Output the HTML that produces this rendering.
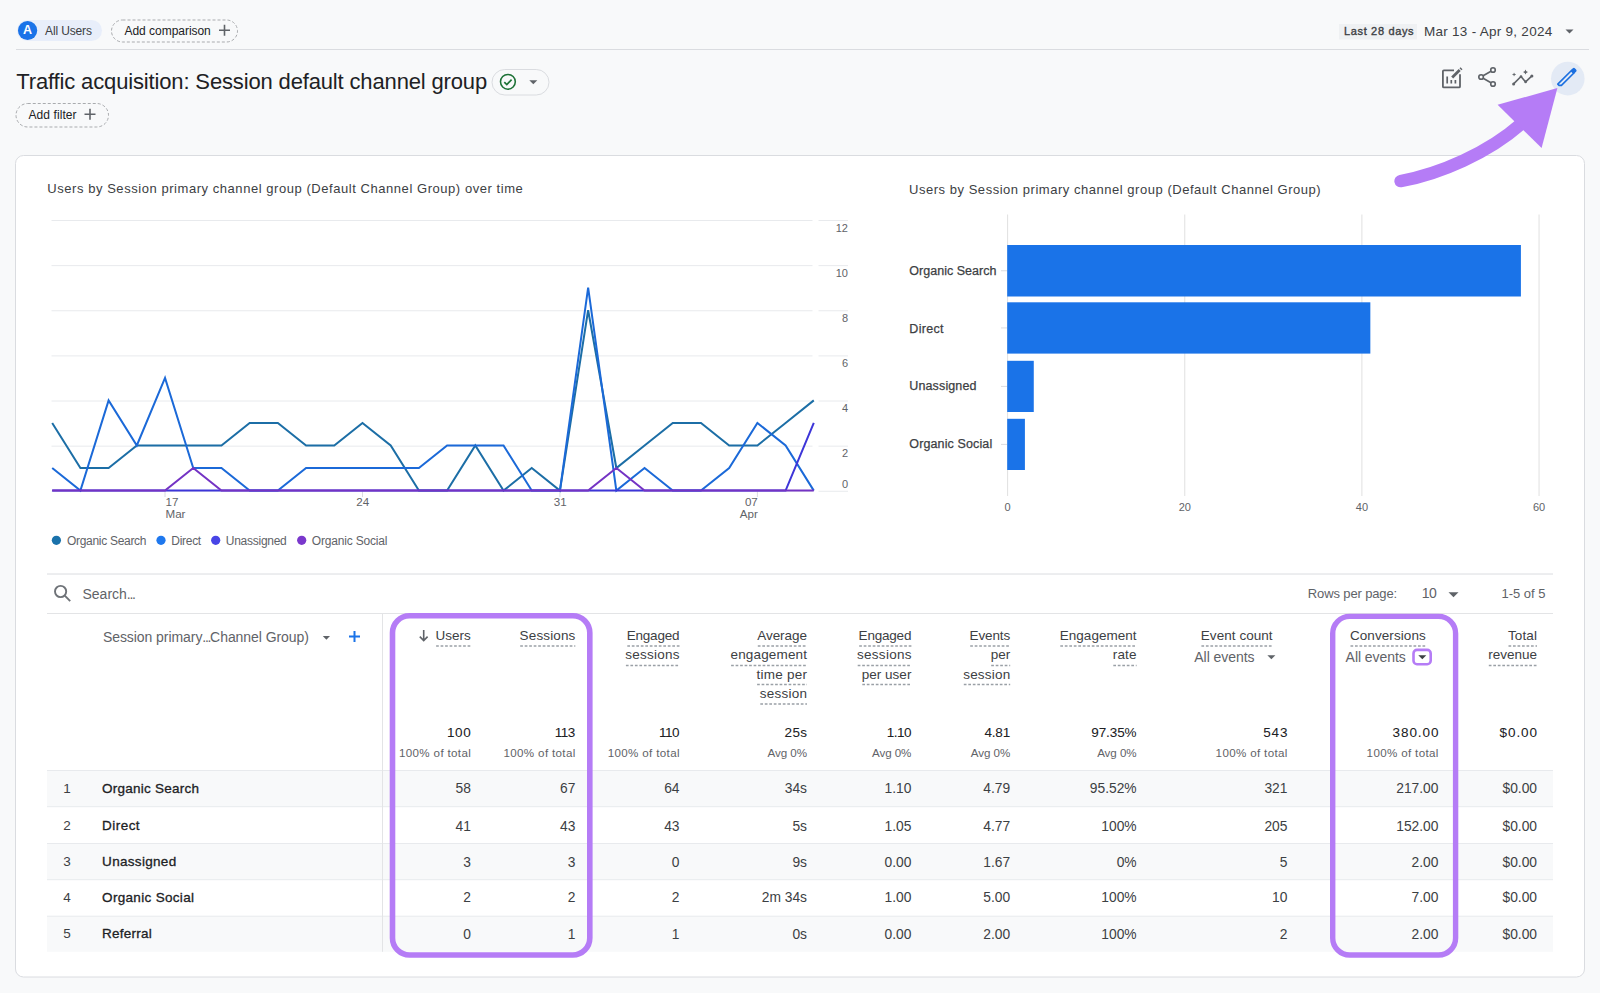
<!DOCTYPE html>
<html><head><meta charset="utf-8">
<style>
html,body{margin:0;padding:0;}
body{width:1600px;height:993px;overflow:hidden;background:#f8f9fa;position:relative;font-family:"Liberation Sans", sans-serif;}
.t{position:absolute;white-space:nowrap;}
svg{position:absolute;left:0;top:0;}
</style></head><body>
<svg width="1600" height="993" viewBox="0 0 1600 993">
  <!-- top bar -->
  <rect x="17" y="20" width="85" height="21" rx="10.5" fill="#e8eefa"/>
  <circle cx="27.6" cy="30.5" r="9.6" fill="#1a73e8"/>
  <rect x="111.5" y="20" width="126" height="22" rx="11" fill="none" stroke="#a9abae" stroke-width="1" stroke-dasharray="3 2"/>
  <path d="M219 30.3h11M224.5 24.8v11" stroke="#5f6368" stroke-width="1.6"/>
  <rect x="1339" y="24" width="78" height="15.5" fill="#eff1f3"/>
  <path d="M1565.5 29.5l4 4 4-4z" fill="#5f6368"/>
  <line x1="16" y1="49.5" x2="1589" y2="49.5" stroke="#dadce0" stroke-width="1"/>
  <!-- title pill -->
  <rect x="492" y="69.5" width="57" height="25.5" rx="12.75" fill="none" stroke="#dadce0" stroke-width="1"/>
  <circle cx="507.9" cy="81.8" r="7.4" fill="none" stroke="#1d7236" stroke-width="1.55"/>
  <path d="M504.3 82.1l2.5 2.5 4.8-4.9" fill="none" stroke="#1d7236" stroke-width="1.7"/>
  <path d="M529.3 80.3l4 4 4-4z" fill="#5f6368"/>
  <rect x="16" y="103.5" width="92.5" height="23.5" rx="11.75" fill="none" stroke="#a9abae" stroke-width="1" stroke-dasharray="3 2"/>
  <path d="M84.5 114.2h11M90 108.7v11" stroke="#5f6368" stroke-width="1.6"/>
  <!-- card -->
  <rect x="15.5" y="155.5" width="1569" height="821.5" rx="8" fill="#fff" stroke="#dadce0" stroke-width="1"/>
  <!-- top right icons -->
  <path d="M1454 70.3h-10.1a1 1 0 0 0-1 1v15.1a1 1 0 0 0 1 1h15.1a1 1 0 0 0 1-1v-12.2" fill="none" stroke="#5f6368" stroke-width="1.8"/>
  <path d="M1447.2 83.6v-7.2M1451.3 83.6v-3.6M1455.4 83.6v-3.6" fill="none" stroke="#5f6368" stroke-width="1.7"/>
  <path d="M1452.2 77.6l7.5-7.5" fill="none" stroke="#5f6368" stroke-width="2.8"/>
  <path d="M1460.5 69.3l1-1" fill="none" stroke="#5f6368" stroke-width="2.8"/>
  <g fill="none" stroke="#5f6368" stroke-width="1.6">
    <circle cx="1493" cy="70" r="2.3"/>
    <circle cx="1481.1" cy="77" r="2.3"/>
    <circle cx="1493" cy="84" r="2.3"/>
    <path d="M1483.1 75.8l7.9-4.6M1483.1 78.2l7.9 4.6"/>
  </g>
  <path d="M1513.6 83.9l7.4-7.4 4.6 5.4 6.3-6" fill="none" stroke="#5f6368" stroke-width="1.6" stroke-linejoin="round"/>
  <g fill="#5f6368">
    <circle cx="1513.6" cy="83.9" r="1.5"/><circle cx="1521" cy="76.5" r="1.3"/><circle cx="1525.6" cy="81.9" r="1.3"/><circle cx="1531.9" cy="75.9" r="1.5"/>
    <path d="M1525.5 69.6l0.8 1.7 1.7 0.8-1.7 0.8-0.8 1.7-0.8-1.7-1.7-0.8 1.7-0.8z"/>
  </g>
  <path d="M1514.1 72.9v3.2M1512.5 74.5h3.2" stroke="#5f6368" stroke-width="0.9"/>
  <circle cx="1567.8" cy="78.6" r="16.8" fill="#e3eaf5"/>
  <g transform="translate(1566.9 77.5) rotate(-44.7)">
    <path d="M-11.1 -1.75H8.5V1.75H-9.4L-11.1 0.1Z" fill="none" stroke="#1a6fe0" stroke-width="1.6" stroke-linejoin="round"/>
    <rect x="7" y="-2.35" width="5.2" height="4.7" rx="1.6" fill="#1a6fe0"/>
  </g>
  <!-- annotation arrow -->
  <path d="M1400.6 181.1C1440 174 1488 153 1521 124" fill="none" stroke="#b57cf6" stroke-width="12.5" stroke-linecap="round"/>
  <path d="M1557.4 88L1497.6 104.8L1541.6 148z" fill="#b57cf6"/>
  <line x1="51.5" y1="220.50" x2="812.5" y2="220.50" stroke="#e8eaed" stroke-width="1"/><line x1="818.5" y1="220.50" x2="848" y2="220.50" stroke="#e8eaed" stroke-width="1"/><line x1="51.5" y1="265.63" x2="812.5" y2="265.63" stroke="#e8eaed" stroke-width="1"/><line x1="818.5" y1="265.63" x2="848" y2="265.63" stroke="#e8eaed" stroke-width="1"/><line x1="51.5" y1="310.76" x2="812.5" y2="310.76" stroke="#e8eaed" stroke-width="1"/><line x1="818.5" y1="310.76" x2="848" y2="310.76" stroke="#e8eaed" stroke-width="1"/><line x1="51.5" y1="355.89" x2="812.5" y2="355.89" stroke="#e8eaed" stroke-width="1"/><line x1="818.5" y1="355.89" x2="848" y2="355.89" stroke="#e8eaed" stroke-width="1"/><line x1="51.5" y1="401.02" x2="812.5" y2="401.02" stroke="#e8eaed" stroke-width="1"/><line x1="818.5" y1="401.02" x2="848" y2="401.02" stroke="#e8eaed" stroke-width="1"/><line x1="51.5" y1="446.15" x2="812.5" y2="446.15" stroke="#e8eaed" stroke-width="1"/><line x1="818.5" y1="446.15" x2="848" y2="446.15" stroke="#e8eaed" stroke-width="1"/><line x1="51.5" y1="491.28" x2="812.5" y2="491.28" stroke="#e8eaed" stroke-width="1"/><line x1="818.5" y1="491.28" x2="848" y2="491.28" stroke="#e8eaed" stroke-width="1"/><line x1="165.03" y1="491" x2="165.03" y2="497" stroke="#dadce0" stroke-width="1"/><line x1="362.48" y1="491" x2="362.48" y2="497" stroke="#dadce0" stroke-width="1"/><line x1="559.93" y1="491" x2="559.93" y2="497" stroke="#dadce0" stroke-width="1"/><line x1="757.39" y1="491" x2="757.39" y2="497" stroke="#dadce0" stroke-width="1"/><polyline points="52.20,422.95 80.41,468.05 108.61,468.05 136.82,445.50 165.03,445.50 193.24,445.50 221.44,445.50 249.65,422.95 277.86,422.95 306.07,445.50 334.27,445.50 362.48,422.95 390.69,445.50 418.90,490.60 447.10,490.60 475.31,445.50 503.52,490.60 531.73,468.05 559.93,490.60 588.14,310.20 616.35,468.05 644.56,445.50 672.76,422.95 700.97,422.95 729.18,445.50 757.39,445.50 785.59,422.95 813.80,400.40" fill="none" stroke="#1c6ea6" stroke-width="2" stroke-linejoin="miter"/><polyline points="52.20,468.05 80.41,490.60 108.61,400.40 136.82,445.50 165.03,377.85 193.24,468.05 221.44,468.05 249.65,490.60 277.86,490.60 306.07,468.05 334.27,468.05 362.48,468.05 390.69,468.05 418.90,468.05 447.10,445.50 475.31,445.50 503.52,445.50 531.73,490.60 559.93,490.60 588.14,287.65 616.35,490.60 644.56,468.05 672.76,490.60 700.97,490.60 729.18,468.05 757.39,422.95 785.59,445.50 813.80,490.60" fill="none" stroke="#1b69d8" stroke-width="2" stroke-linejoin="miter"/><polyline points="52.20,490.60 80.41,490.60 108.61,490.60 136.82,490.60 165.03,490.60 193.24,490.60 221.44,490.60 249.65,490.60 277.86,490.60 306.07,490.60 334.27,490.60 362.48,490.60 390.69,490.60 418.90,490.60 447.10,490.60 475.31,490.60 503.52,490.60 531.73,490.60 559.93,490.60 588.14,490.60 616.35,490.60 644.56,490.60 672.76,490.60 700.97,490.60 729.18,490.60 757.39,490.60 785.59,490.60 813.80,422.95" fill="none" stroke="#3d35d8" stroke-width="2" stroke-linejoin="miter"/><polyline points="52.20,490.60 80.41,490.60 108.61,490.60 136.82,490.60 165.03,490.60 193.24,468.05 221.44,490.60 249.65,490.60 277.86,490.60 306.07,490.60 334.27,490.60 362.48,490.60 390.69,490.60 418.90,490.60 447.10,490.60 475.31,490.60 503.52,490.60 531.73,490.60 559.93,490.60 588.14,490.60 616.35,468.05 644.56,490.60 672.76,490.60 700.97,490.60 729.18,490.60 757.39,490.60 785.59,490.60 813.80,490.60" fill="none" stroke="#7433c4" stroke-width="2" stroke-linejoin="miter"/><circle cx="56.4" cy="540.3" r="4.6" fill="#1a72ab"/><circle cx="161" cy="540.3" r="4.6" fill="#1f78ee"/><circle cx="215.7" cy="540.3" r="4.6" fill="#4845e6"/><circle cx="301.7" cy="540.3" r="4.6" fill="#7a38cc"/>
  <line x1="1007.60" y1="214.5" x2="1007.60" y2="496" stroke="#e0e0e0" stroke-width="1"/><line x1="1184.75" y1="214.5" x2="1184.75" y2="496" stroke="#e0e0e0" stroke-width="1"/><line x1="1361.90" y1="214.5" x2="1361.90" y2="496" stroke="#e0e0e0" stroke-width="1"/><line x1="1539.05" y1="214.5" x2="1539.05" y2="496" stroke="#e0e0e0" stroke-width="1"/><rect x="1007.2" y="245" width="513.71" height="51.50" fill="#1a73e8"/><line x1="1001" y1="270.75" x2="1007" y2="270.75" stroke="#dadce0" stroke-width="1"/><rect x="1007.2" y="302.3" width="363.14" height="51.30" fill="#1a73e8"/><line x1="1001" y1="327.95" x2="1007" y2="327.95" stroke="#dadce0" stroke-width="1"/><rect x="1007.2" y="360.8" width="26.57" height="51.20" fill="#1a73e8"/><line x1="1001" y1="386.40" x2="1007" y2="386.40" stroke="#dadce0" stroke-width="1"/><rect x="1007.2" y="418.8" width="17.71" height="51.20" fill="#1a73e8"/><line x1="1001" y1="444.40" x2="1007" y2="444.40" stroke="#dadce0" stroke-width="1"/>
  <rect x="47" y="770.5" width="1506" height="36.20" fill="#f8f9fa"/><rect x="47" y="843.5" width="1506" height="36.20" fill="#f8f9fa"/><rect x="47" y="916.2" width="1506" height="35.60" fill="#f8f9fa"/><line x1="47" y1="770.5" x2="1553" y2="770.5" stroke="#e8eaed" stroke-width="1"/><line x1="47" y1="806.7" x2="1553" y2="806.7" stroke="#e8eaed" stroke-width="1"/><line x1="47" y1="843.5" x2="1553" y2="843.5" stroke="#e8eaed" stroke-width="1"/><line x1="47" y1="879.7" x2="1553" y2="879.7" stroke="#e8eaed" stroke-width="1"/><line x1="47" y1="916.2" x2="1553" y2="916.2" stroke="#e8eaed" stroke-width="1"/><line x1="47" y1="574" x2="1553" y2="574" stroke="#dadce0" stroke-width="1"/><line x1="47" y1="613.5" x2="1553" y2="613.5" stroke="#e3e4e6" stroke-width="1"/><line x1="382.5" y1="613.5" x2="382.5" y2="951.8" stroke="#e3e4e6" stroke-width="1"/><line x1="436.10" y1="646.10" x2="470.80" y2="646.10" stroke="#9aa0a6" stroke-width="1.5" stroke-dasharray="2.7 1.8"/><line x1="520.20" y1="646.10" x2="575.30" y2="646.10" stroke="#9aa0a6" stroke-width="1.5" stroke-dasharray="2.7 1.8"/><line x1="627.30" y1="646.10" x2="679.50" y2="646.10" stroke="#9aa0a6" stroke-width="1.5" stroke-dasharray="2.7 1.8"/><line x1="625.90" y1="665.40" x2="679.50" y2="665.40" stroke="#9aa0a6" stroke-width="1.5" stroke-dasharray="2.7 1.8"/><line x1="757.80" y1="646.10" x2="807.00" y2="646.10" stroke="#9aa0a6" stroke-width="1.5" stroke-dasharray="2.7 1.8"/><line x1="731.10" y1="665.40" x2="807.00" y2="665.40" stroke="#9aa0a6" stroke-width="1.5" stroke-dasharray="2.7 1.8"/><line x1="757.10" y1="684.60" x2="807.00" y2="684.60" stroke="#9aa0a6" stroke-width="1.5" stroke-dasharray="2.7 1.8"/><line x1="760.30" y1="703.90" x2="807.00" y2="703.90" stroke="#9aa0a6" stroke-width="1.5" stroke-dasharray="2.7 1.8"/><line x1="859.20" y1="646.10" x2="911.40" y2="646.10" stroke="#9aa0a6" stroke-width="1.5" stroke-dasharray="2.7 1.8"/><line x1="857.70" y1="665.40" x2="911.40" y2="665.40" stroke="#9aa0a6" stroke-width="1.5" stroke-dasharray="2.7 1.8"/><line x1="862.30" y1="684.60" x2="911.40" y2="684.60" stroke="#9aa0a6" stroke-width="1.5" stroke-dasharray="2.7 1.8"/><line x1="970.20" y1="646.10" x2="1010.20" y2="646.10" stroke="#9aa0a6" stroke-width="1.5" stroke-dasharray="2.7 1.8"/><line x1="991.20" y1="665.40" x2="1010.20" y2="665.40" stroke="#9aa0a6" stroke-width="1.5" stroke-dasharray="2.7 1.8"/><line x1="963.80" y1="684.60" x2="1010.20" y2="684.60" stroke="#9aa0a6" stroke-width="1.5" stroke-dasharray="2.7 1.8"/><line x1="1060.30" y1="646.10" x2="1136.60" y2="646.10" stroke="#9aa0a6" stroke-width="1.5" stroke-dasharray="2.7 1.8"/><line x1="1113.30" y1="665.40" x2="1136.60" y2="665.40" stroke="#9aa0a6" stroke-width="1.5" stroke-dasharray="2.7 1.8"/><line x1="1201.40" y1="646.10" x2="1272.60" y2="646.10" stroke="#9aa0a6" stroke-width="1.5" stroke-dasharray="2.7 1.8"/><line x1="1350.50" y1="646.10" x2="1425.80" y2="646.10" stroke="#9aa0a6" stroke-width="1.5" stroke-dasharray="2.7 1.8"/><line x1="1508.50" y1="646.10" x2="1537.00" y2="646.10" stroke="#9aa0a6" stroke-width="1.5" stroke-dasharray="2.7 1.8"/><line x1="1488.80" y1="665.40" x2="1537.00" y2="665.40" stroke="#9aa0a6" stroke-width="1.5" stroke-dasharray="2.7 1.8"/>
  <!-- table icons -->
  <g fill="none" stroke="#6f7378" stroke-width="1.9">
    <circle cx="60.6" cy="591.5" r="5.6"/>
    <path d="M64.8 595.7l5.4 5.4"/>
  </g>
  <path d="M1448.5 592.3l5 5 5-5z" fill="#5f6368"/>
  <path d="M322.8 636l3.6 3.7 3.6-3.7z" fill="#5f6368"/>
  <path d="M349 636.6h11M354.5 631.1v11" stroke="#1a73e8" stroke-width="2"/>
  <path d="M423.7 630v10.4M419.8 636.6l3.9 3.9 3.9-3.9" fill="none" stroke="#5f6368" stroke-width="1.6"/>
  <path d="M1267.4 655.3l4 4 4-4z" fill="#5f6368"/>
  <path d="M1418.3 655.3l4 4 4-4z" fill="#3c4043"/>
  <rect x="1413.5" y="649.9" width="17.2" height="14.3" rx="3.5" fill="none" stroke="#b57cf6" stroke-width="2.6"/>
  <rect x="392.5" y="615.8" width="197.3" height="339.2" rx="17" fill="none" stroke="#b57cf6" stroke-width="5.6"/>
  <rect x="1332.7" y="616.4" width="122.9" height="338.6" rx="17" fill="none" stroke="#b57cf6" stroke-width="5.4"/>
</svg>
<div class="t" id="t0" style="top:23.36px;font-size:12.5px;line-height:15.625px;color:#fff;font-weight:700;left:-372.40px;width:800px;text-align:center;">A</div>
<div class="t" id="t1" style="top:23.94px;font-size:12px;line-height:15.0px;color:#3c4043;letter-spacing:-0.127px;left:45.00px;">All Users</div>
<div class="t" id="t2" style="top:23.94px;font-size:12px;line-height:15.0px;color:#202124;letter-spacing:-0.032px;left:124.50px;">Add comparison</div>
<div class="t" id="t3" style="top:25.01px;font-size:11px;line-height:13.75px;color:#3c4043;letter-spacing:0.655px;left:1344.00px;-webkit-text-stroke:0.35px #3c4043;">Last 28 days</div>
<div class="t" id="t4" style="top:23.58px;font-size:13.5px;line-height:16.875px;color:#3c4043;letter-spacing:0.270px;left:1424.00px;">Mar 13 - Apr 9, 2024</div>
<div class="t" id="t5" style="top:67.73px;font-size:22px;line-height:27.5px;color:#202124;letter-spacing:-0.149px;left:16.30px;">Traffic acquisition: Session default channel group</div>
<div class="t" id="t6" style="top:107.84px;font-size:12px;line-height:15.0px;color:#202124;letter-spacing:0.081px;left:28.50px;">Add filter</div>
<div class="t" id="t7" style="top:181.47px;font-size:13px;line-height:16.25px;color:#3c4043;letter-spacing:0.550px;left:47.30px;">Users by Session primary channel group (Default Channel Group) over time</div>
<div class="t" id="t8" style="top:221.81px;font-size:11px;line-height:13.75px;color:#5f6368;right:752.00px;">12</div>
<div class="t" id="t9" style="top:266.94px;font-size:11px;line-height:13.75px;color:#5f6368;right:752.00px;">10</div>
<div class="t" id="t10" style="top:312.07px;font-size:11px;line-height:13.75px;color:#5f6368;right:752.00px;">8</div>
<div class="t" id="t11" style="top:357.20px;font-size:11px;line-height:13.75px;color:#5f6368;right:752.00px;">6</div>
<div class="t" id="t12" style="top:402.33px;font-size:11px;line-height:13.75px;color:#5f6368;right:752.00px;">4</div>
<div class="t" id="t13" style="top:447.46px;font-size:11px;line-height:13.75px;color:#5f6368;right:752.00px;">2</div>
<div class="t" id="t14" style="top:477.61px;font-size:11px;line-height:13.75px;color:#5f6368;right:752.00px;">0</div>
<div class="t" id="t15" style="top:495.23px;font-size:11.6px;line-height:14.5px;color:#5f6368;left:165.50px;">17</div>
<div class="t" id="t16" style="top:507.03px;font-size:11.6px;line-height:14.5px;color:#5f6368;left:165.50px;">Mar</div>
<div class="t" id="t17" style="top:495.23px;font-size:11.6px;line-height:14.5px;color:#5f6368;left:-37.20px;width:800px;text-align:center;">24</div>
<div class="t" id="t18" style="top:495.23px;font-size:11.6px;line-height:14.5px;color:#5f6368;left:160.30px;width:800px;text-align:center;">31</div>
<div class="t" id="t19" style="top:495.23px;font-size:11.6px;line-height:14.5px;color:#5f6368;right:842.20px;">07</div>
<div class="t" id="t20" style="top:507.03px;font-size:11.6px;line-height:14.5px;color:#5f6368;right:842.20px;">Apr</div>
<div class="t" id="t21" style="top:533.84px;font-size:12px;line-height:15.0px;color:#5f6368;letter-spacing:-0.298px;left:67.00px;">Organic Search</div>
<div class="t" id="t22" style="top:533.84px;font-size:12px;line-height:15.0px;color:#5f6368;letter-spacing:-0.289px;left:171.30px;">Direct</div>
<div class="t" id="t23" style="top:533.84px;font-size:12px;line-height:15.0px;color:#5f6368;letter-spacing:-0.266px;left:225.80px;">Unassigned</div>
<div class="t" id="t24" style="top:533.84px;font-size:12px;line-height:15.0px;color:#5f6368;letter-spacing:-0.188px;left:311.80px;">Organic Social</div>
<div class="t" id="t25" style="top:182.07px;font-size:13px;line-height:16.25px;color:#3c4043;letter-spacing:0.530px;left:909.00px;">Users by Session primary channel group (Default Channel Group)</div>
<div class="t" id="t26" style="top:263.71px;font-size:12.5px;line-height:15.625px;color:#3c4043;letter-spacing:0.019px;left:909.30px;-webkit-text-stroke:0.25px #3c4043;">Organic Search</div>
<div class="t" id="t27" style="top:322.11px;font-size:12.5px;line-height:15.625px;color:#3c4043;letter-spacing:0.331px;left:909.30px;-webkit-text-stroke:0.25px #3c4043;">Direct</div>
<div class="t" id="t28" style="top:379.36px;font-size:12.5px;line-height:15.625px;color:#3c4043;letter-spacing:0.131px;left:909.30px;-webkit-text-stroke:0.25px #3c4043;">Unassigned</div>
<div class="t" id="t29" style="top:437.36px;font-size:12.5px;line-height:15.625px;color:#3c4043;letter-spacing:0.124px;left:909.30px;-webkit-text-stroke:0.25px #3c4043;">Organic Social</div>
<div class="t" id="t30" style="top:500.71px;font-size:11px;line-height:13.75px;color:#5f6368;left:607.60px;width:800px;text-align:center;">0</div>
<div class="t" id="t31" style="top:500.71px;font-size:11px;line-height:13.75px;color:#5f6368;left:784.75px;width:800px;text-align:center;">20</div>
<div class="t" id="t32" style="top:500.71px;font-size:11px;line-height:13.75px;color:#5f6368;left:961.90px;width:800px;text-align:center;">40</div>
<div class="t" id="t33" style="top:500.71px;font-size:11px;line-height:13.75px;color:#5f6368;left:1139.05px;width:800px;text-align:center;">60</div>
<div class="t" id="t34" style="top:585.60px;font-size:14px;line-height:17.5px;color:#5f6368;left:82.50px;">Search<span style="letter-spacing:-1.3px">...</span></div>
<div class="t" id="t35" style="top:585.97px;font-size:13px;line-height:16.25px;color:#5f6368;letter-spacing:-0.128px;left:1307.80px;">Rows per page:</div>
<div class="t" id="t36" style="top:585.40px;font-size:14px;line-height:17.5px;color:#5f6368;letter-spacing:-0.500px;left:1421.80px;">10</div>
<div class="t" id="t37" style="top:585.97px;font-size:13px;line-height:16.25px;color:#5f6368;letter-spacing:-0.041px;left:1501.60px;">1-5 of 5</div>
<div class="t" id="t38" style="top:629.00px;font-size:14px;line-height:17.5px;color:#5f6368;letter-spacing:-0.062px;left:102.90px;">Session primary<span style="letter-spacing:-1.3px">...</span>Channel Group)</div>
<div class="t" id="t39" style="top:628.18px;font-size:13.5px;line-height:16.875px;color:#3c4043;letter-spacing:0.011px;right:1129.19px;">Users</div>
<div class="t" id="t40" style="top:628.18px;font-size:13.5px;line-height:16.875px;color:#3c4043;letter-spacing:0.131px;right:1024.57px;">Sessions</div>
<div class="t" id="t41" style="top:628.18px;font-size:13.5px;line-height:16.875px;color:#3c4043;letter-spacing:-0.209px;right:920.71px;">Engaged</div>
<div class="t" id="t42" style="top:647.48px;font-size:13.5px;line-height:16.875px;color:#3c4043;letter-spacing:0.238px;right:920.26px;">sessions</div>
<div class="t" id="t43" style="top:628.18px;font-size:13.5px;line-height:16.875px;color:#3c4043;letter-spacing:-0.042px;right:793.04px;">Average</div>
<div class="t" id="t44" style="top:647.48px;font-size:13.5px;line-height:16.875px;color:#3c4043;letter-spacing:0.159px;right:792.84px;">engagement</div>
<div class="t" id="t45" style="top:666.68px;font-size:13.5px;line-height:16.875px;color:#3c4043;letter-spacing:0.248px;right:792.75px;">time per</div>
<div class="t" id="t46" style="top:685.98px;font-size:13.5px;line-height:16.875px;color:#3c4043;letter-spacing:0.254px;right:792.75px;">session</div>
<div class="t" id="t47" style="top:628.18px;font-size:13.5px;line-height:16.875px;color:#3c4043;letter-spacing:-0.209px;right:688.81px;">Engaged</div>
<div class="t" id="t48" style="top:647.48px;font-size:13.5px;line-height:16.875px;color:#3c4043;letter-spacing:0.252px;right:688.35px;">sessions</div>
<div class="t" id="t49" style="top:666.68px;font-size:13.5px;line-height:16.875px;color:#3c4043;letter-spacing:0.025px;right:688.58px;">per user</div>
<div class="t" id="t50" style="top:628.18px;font-size:13.5px;line-height:16.875px;color:#3c4043;letter-spacing:-0.135px;right:589.93px;">Events</div>
<div class="t" id="t51" style="top:647.48px;font-size:13.5px;line-height:16.875px;color:#3c4043;letter-spacing:0.036px;right:589.76px;">per</div>
<div class="t" id="t52" style="top:666.68px;font-size:13.5px;line-height:16.875px;color:#3c4043;letter-spacing:0.203px;right:589.60px;">session</div>
<div class="t" id="t53" style="top:628.18px;font-size:13.5px;line-height:16.875px;color:#3c4043;letter-spacing:0.037px;right:463.36px;">Engagement</div>
<div class="t" id="t54" style="top:647.48px;font-size:13.5px;line-height:16.875px;color:#3c4043;letter-spacing:0.208px;right:463.19px;">rate</div>
<div class="t" id="t55" style="top:628.18px;font-size:13.5px;line-height:16.875px;color:#3c4043;letter-spacing:0.049px;right:327.35px;">Event count</div>
<div class="t" id="t56" style="top:628.18px;font-size:13.5px;line-height:16.875px;color:#3c4043;letter-spacing:0.085px;right:174.12px;">Conversions</div>
<div class="t" id="t57" style="top:628.18px;font-size:13.5px;line-height:16.875px;color:#3c4043;letter-spacing:0.143px;right:62.86px;">Total</div>
<div class="t" id="t58" style="top:647.48px;font-size:13.5px;line-height:16.875px;color:#3c4043;right:63.00px;">revenue</div>
<div class="t" id="t59" style="top:648.90px;font-size:14px;line-height:17.5px;color:#5f6368;letter-spacing:-0.044px;left:1194.30px;">All events</div>
<div class="t" id="t60" style="top:648.90px;font-size:14px;line-height:17.5px;color:#5f6368;letter-spacing:-0.056px;left:1345.60px;">All events</div>
<div class="t" id="t61" style="top:725.08px;font-size:13.5px;line-height:16.875px;color:#202124;letter-spacing:0.684px;right:1128.52px;-webkit-text-stroke:0.05px #202124;">100</div>
<div class="t" id="t62" style="top:746.33px;font-size:11.6px;line-height:14.5px;color:#5f6368;letter-spacing:0.343px;right:1128.86px;">100% of total</div>
<div class="t" id="t63" style="top:725.08px;font-size:13.5px;line-height:16.875px;color:#202124;letter-spacing:-0.500px;right:1025.20px;-webkit-text-stroke:0.05px #202124;">113</div>
<div class="t" id="t64" style="top:746.33px;font-size:11.6px;line-height:14.5px;color:#5f6368;letter-spacing:0.343px;right:1024.36px;">100% of total</div>
<div class="t" id="t65" style="top:725.08px;font-size:13.5px;line-height:16.875px;color:#202124;letter-spacing:-0.465px;right:920.97px;-webkit-text-stroke:0.05px #202124;">110</div>
<div class="t" id="t66" style="top:746.33px;font-size:11.6px;line-height:14.5px;color:#5f6368;letter-spacing:0.343px;right:920.16px;">100% of total</div>
<div class="t" id="t67" style="top:725.08px;font-size:13.5px;line-height:16.875px;color:#202124;letter-spacing:0.313px;right:792.69px;-webkit-text-stroke:0.05px #202124;">25s</div>
<div class="t" id="t68" style="top:746.33px;font-size:11.6px;line-height:14.5px;color:#5f6368;letter-spacing:-0.052px;right:793.05px;">Avg 0%</div>
<div class="t" id="t69" style="top:725.08px;font-size:13.5px;line-height:16.875px;color:#202124;letter-spacing:-0.500px;right:689.10px;-webkit-text-stroke:0.05px #202124;">1.10</div>
<div class="t" id="t70" style="top:746.33px;font-size:11.6px;line-height:14.5px;color:#5f6368;letter-spacing:-0.052px;right:688.65px;">Avg 0%</div>
<div class="t" id="t71" style="top:725.08px;font-size:13.5px;line-height:16.875px;color:#202124;letter-spacing:-0.160px;right:589.96px;-webkit-text-stroke:0.05px #202124;">4.81</div>
<div class="t" id="t72" style="top:746.33px;font-size:11.6px;line-height:14.5px;color:#5f6368;letter-spacing:-0.052px;right:589.85px;">Avg 0%</div>
<div class="t" id="t73" style="top:725.08px;font-size:13.5px;line-height:16.875px;color:#202124;letter-spacing:-0.099px;right:463.50px;-webkit-text-stroke:0.05px #202124;">97.35%</div>
<div class="t" id="t74" style="top:746.33px;font-size:11.6px;line-height:14.5px;color:#5f6368;letter-spacing:-0.052px;right:463.45px;">Avg 0%</div>
<div class="t" id="t75" style="top:725.08px;font-size:13.5px;line-height:16.875px;color:#202124;letter-spacing:0.784px;right:311.82px;-webkit-text-stroke:0.05px #202124;">543</div>
<div class="t" id="t76" style="top:746.33px;font-size:11.6px;line-height:14.5px;color:#5f6368;letter-spacing:0.343px;right:312.26px;">100% of total</div>
<div class="t" id="t77" style="top:725.08px;font-size:13.5px;line-height:16.875px;color:#202124;letter-spacing:0.900px;right:160.70px;-webkit-text-stroke:0.05px #202124;">380.00</div>
<div class="t" id="t78" style="top:746.33px;font-size:11.6px;line-height:14.5px;color:#5f6368;letter-spacing:0.343px;right:161.26px;">100% of total</div>
<div class="t" id="t79" style="top:725.08px;font-size:13.5px;line-height:16.875px;color:#202124;letter-spacing:0.900px;right:62.10px;-webkit-text-stroke:0.05px #202124;">$0.00</div>
<div class="t" id="t80" style="top:780.58px;font-size:13.5px;line-height:16.875px;color:#3c4043;left:63.20px;">1</div>
<div class="t" id="t81" style="top:780.58px;font-size:13.5px;line-height:16.875px;color:#202124;letter-spacing:0.231px;left:102.10px;-webkit-text-stroke:0.3px #202124;">Organic Search</div>
<div class="t" id="t82" style="top:780.29px;font-size:13.8px;line-height:17.25px;color:#3c4043;right:1129.20px;">58</div>
<div class="t" id="t83" style="top:780.29px;font-size:13.8px;line-height:17.25px;color:#3c4043;right:1024.70px;">67</div>
<div class="t" id="t84" style="top:780.29px;font-size:13.8px;line-height:17.25px;color:#3c4043;right:920.50px;">64</div>
<div class="t" id="t85" style="top:780.29px;font-size:13.8px;line-height:17.25px;color:#3c4043;right:793.00px;">34s</div>
<div class="t" id="t86" style="top:780.29px;font-size:13.8px;line-height:17.25px;color:#3c4043;right:688.60px;">1.10</div>
<div class="t" id="t87" style="top:780.29px;font-size:13.8px;line-height:17.25px;color:#3c4043;right:589.80px;">4.79</div>
<div class="t" id="t88" style="top:780.29px;font-size:13.8px;line-height:17.25px;color:#3c4043;right:463.40px;">95.52%</div>
<div class="t" id="t89" style="top:780.29px;font-size:13.8px;line-height:17.25px;color:#3c4043;right:312.60px;">321</div>
<div class="t" id="t90" style="top:780.29px;font-size:13.8px;line-height:17.25px;color:#3c4043;right:161.60px;">217.00</div>
<div class="t" id="t91" style="top:780.29px;font-size:13.8px;line-height:17.25px;color:#3c4043;right:63.00px;">$0.00</div>
<div class="t" id="t92" style="top:817.88px;font-size:13.5px;line-height:16.875px;color:#3c4043;left:63.20px;">2</div>
<div class="t" id="t93" style="top:817.88px;font-size:13.5px;line-height:16.875px;color:#202124;letter-spacing:0.448px;left:102.10px;-webkit-text-stroke:0.3px #202124;">Direct</div>
<div class="t" id="t94" style="top:817.59px;font-size:13.8px;line-height:17.25px;color:#3c4043;right:1129.20px;">41</div>
<div class="t" id="t95" style="top:817.59px;font-size:13.8px;line-height:17.25px;color:#3c4043;right:1024.70px;">43</div>
<div class="t" id="t96" style="top:817.59px;font-size:13.8px;line-height:17.25px;color:#3c4043;right:920.50px;">43</div>
<div class="t" id="t97" style="top:817.59px;font-size:13.8px;line-height:17.25px;color:#3c4043;right:793.00px;">5s</div>
<div class="t" id="t98" style="top:817.59px;font-size:13.8px;line-height:17.25px;color:#3c4043;right:688.60px;">1.05</div>
<div class="t" id="t99" style="top:817.59px;font-size:13.8px;line-height:17.25px;color:#3c4043;right:589.80px;">4.77</div>
<div class="t" id="t100" style="top:817.59px;font-size:13.8px;line-height:17.25px;color:#3c4043;right:463.40px;">100%</div>
<div class="t" id="t101" style="top:817.59px;font-size:13.8px;line-height:17.25px;color:#3c4043;right:312.60px;">205</div>
<div class="t" id="t102" style="top:817.59px;font-size:13.8px;line-height:17.25px;color:#3c4043;right:161.60px;">152.00</div>
<div class="t" id="t103" style="top:817.59px;font-size:13.8px;line-height:17.25px;color:#3c4043;right:63.00px;">$0.00</div>
<div class="t" id="t104" style="top:853.88px;font-size:13.5px;line-height:16.875px;color:#3c4043;left:63.20px;">3</div>
<div class="t" id="t105" style="top:853.88px;font-size:13.5px;line-height:16.875px;color:#202124;letter-spacing:0.310px;left:102.10px;-webkit-text-stroke:0.3px #202124;">Unassigned</div>
<div class="t" id="t106" style="top:853.59px;font-size:13.8px;line-height:17.25px;color:#3c4043;right:1129.20px;">3</div>
<div class="t" id="t107" style="top:853.59px;font-size:13.8px;line-height:17.25px;color:#3c4043;right:1024.70px;">3</div>
<div class="t" id="t108" style="top:853.59px;font-size:13.8px;line-height:17.25px;color:#3c4043;right:920.50px;">0</div>
<div class="t" id="t109" style="top:853.59px;font-size:13.8px;line-height:17.25px;color:#3c4043;right:793.00px;">9s</div>
<div class="t" id="t110" style="top:853.59px;font-size:13.8px;line-height:17.25px;color:#3c4043;right:688.60px;">0.00</div>
<div class="t" id="t111" style="top:853.59px;font-size:13.8px;line-height:17.25px;color:#3c4043;right:589.80px;">1.67</div>
<div class="t" id="t112" style="top:853.59px;font-size:13.8px;line-height:17.25px;color:#3c4043;right:463.40px;">0%</div>
<div class="t" id="t113" style="top:853.59px;font-size:13.8px;line-height:17.25px;color:#3c4043;right:312.60px;">5</div>
<div class="t" id="t114" style="top:853.59px;font-size:13.8px;line-height:17.25px;color:#3c4043;right:161.60px;">2.00</div>
<div class="t" id="t115" style="top:853.59px;font-size:13.8px;line-height:17.25px;color:#3c4043;right:63.00px;">$0.00</div>
<div class="t" id="t116" style="top:889.78px;font-size:13.5px;line-height:16.875px;color:#3c4043;left:63.20px;">4</div>
<div class="t" id="t117" style="top:889.78px;font-size:13.5px;line-height:16.875px;color:#202124;letter-spacing:0.316px;left:102.10px;-webkit-text-stroke:0.3px #202124;">Organic Social</div>
<div class="t" id="t118" style="top:889.49px;font-size:13.8px;line-height:17.25px;color:#3c4043;right:1129.20px;">2</div>
<div class="t" id="t119" style="top:889.49px;font-size:13.8px;line-height:17.25px;color:#3c4043;right:1024.70px;">2</div>
<div class="t" id="t120" style="top:889.49px;font-size:13.8px;line-height:17.25px;color:#3c4043;right:920.50px;">2</div>
<div class="t" id="t121" style="top:889.49px;font-size:13.8px;line-height:17.25px;color:#3c4043;right:793.00px;">2m 34s</div>
<div class="t" id="t122" style="top:889.49px;font-size:13.8px;line-height:17.25px;color:#3c4043;right:688.60px;">1.00</div>
<div class="t" id="t123" style="top:889.49px;font-size:13.8px;line-height:17.25px;color:#3c4043;right:589.80px;">5.00</div>
<div class="t" id="t124" style="top:889.49px;font-size:13.8px;line-height:17.25px;color:#3c4043;right:463.40px;">100%</div>
<div class="t" id="t125" style="top:889.49px;font-size:13.8px;line-height:17.25px;color:#3c4043;right:312.60px;">10</div>
<div class="t" id="t126" style="top:889.49px;font-size:13.8px;line-height:17.25px;color:#3c4043;right:161.60px;">7.00</div>
<div class="t" id="t127" style="top:889.49px;font-size:13.8px;line-height:17.25px;color:#3c4043;right:63.00px;">$0.00</div>
<div class="t" id="t128" style="top:925.98px;font-size:13.5px;line-height:16.875px;color:#3c4043;left:63.20px;">5</div>
<div class="t" id="t129" style="top:925.98px;font-size:13.5px;line-height:16.875px;color:#202124;letter-spacing:0.239px;left:102.10px;-webkit-text-stroke:0.3px #202124;">Referral</div>
<div class="t" id="t130" style="top:925.69px;font-size:13.8px;line-height:17.25px;color:#3c4043;right:1129.20px;">0</div>
<div class="t" id="t131" style="top:925.69px;font-size:13.8px;line-height:17.25px;color:#3c4043;right:1024.70px;">1</div>
<div class="t" id="t132" style="top:925.69px;font-size:13.8px;line-height:17.25px;color:#3c4043;right:920.50px;">1</div>
<div class="t" id="t133" style="top:925.69px;font-size:13.8px;line-height:17.25px;color:#3c4043;right:793.00px;">0s</div>
<div class="t" id="t134" style="top:925.69px;font-size:13.8px;line-height:17.25px;color:#3c4043;right:688.60px;">0.00</div>
<div class="t" id="t135" style="top:925.69px;font-size:13.8px;line-height:17.25px;color:#3c4043;right:589.80px;">2.00</div>
<div class="t" id="t136" style="top:925.69px;font-size:13.8px;line-height:17.25px;color:#3c4043;right:463.40px;">100%</div>
<div class="t" id="t137" style="top:925.69px;font-size:13.8px;line-height:17.25px;color:#3c4043;right:312.60px;">2</div>
<div class="t" id="t138" style="top:925.69px;font-size:13.8px;line-height:17.25px;color:#3c4043;right:161.60px;">2.00</div>
<div class="t" id="t139" style="top:925.69px;font-size:13.8px;line-height:17.25px;color:#3c4043;right:63.00px;">$0.00</div>
</body></html>
